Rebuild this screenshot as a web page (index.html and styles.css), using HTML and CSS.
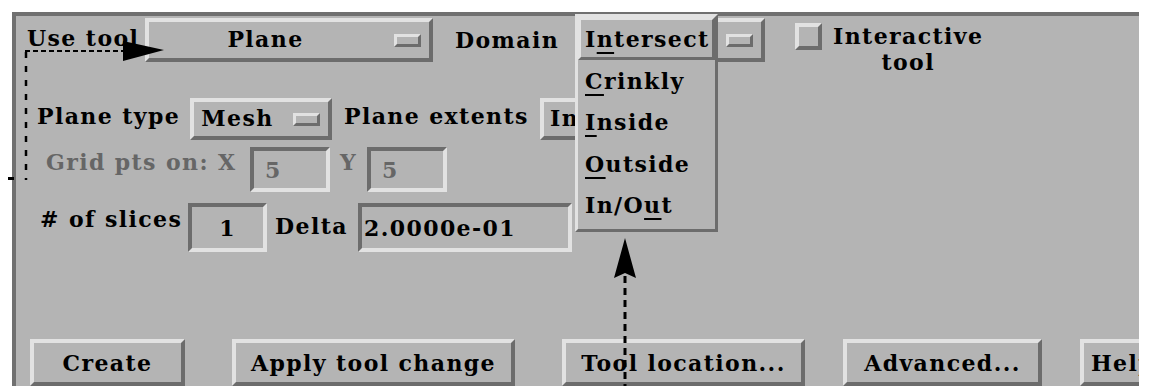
FILE: index.html
```html
<!DOCTYPE html>
<html lang="en">
<head>
    <meta charset="UTF-8">
    <meta name="viewport" content="width=device-width, initial-scale=1.0">
    <title>Plane tool</title>
    <link rel="stylesheet" href="styles.css">
</head>
<body>
    <div class="panel">

        <div class="row row-tool">
            <span class="label label-use">Use tool</span>
            <div class="option option-plane">
                <span class="option-text">Plane</span>
                <span class="indicator"></span>
            </div>
            <span class="label label-domain">Domain</span>
            <div class="option option-domain">
                <span class="option-text"></span>
                <span class="indicator"></span>
            </div>
            <div class="toggle">
                <span class="check"></span>
                <span class="toggle-text">Interactive<br>tool</span>
            </div>
        </div>

        <div class="row row-plane">
            <span class="label label-ptype">Plane type</span>
            <div class="option option-mesh">
                <span class="option-text">Mesh</span>
                <span class="indicator"></span>
            </div>
            <span class="label label-extents">Plane extents</span>
            <div class="option option-extents">
                <span class="option-text">In</span>
                <span class="indicator"></span>
            </div>
        </div>

        <div class="row row-grid">
            <span class="label label-grid disabled">Grid pts on: X</span>
            <div class="entry entry-x disabled">5</div>
            <span class="label label-y disabled">Y</span>
            <div class="entry entry-y disabled">5</div>
        </div>

        <div class="row row-slices">
            <span class="label label-slices"># of slices</span>
            <div class="entry entry-n">1</div>
            <span class="label label-delta">Delta</span>
            <div class="entry entry-delta">2.0000e-01</div>
        </div>

        <div class="row row-actions">
            <div class="button btn-create">Create</div>
            <div class="button btn-apply">Apply tool change</div>
            <div class="button btn-location">Tool location...</div>
            <div class="button btn-advanced">Advanced...</div>
            <div class="button btn-help">Help</div>
        </div>

    </div>

    <!-- popup menu of the Domain option, shown open -->
    <div class="popup">
        <div class="popup-item armed">I<u>n</u>tersect</div>
        <div class="popup-item"><u>C</u>rinkly</div>
        <div class="popup-item"><u>I</u>nside</div>
        <div class="popup-item"><u>O</u>utside</div>
        <div class="popup-item">In/O<u>u</u>t</div>
    </div>

    <!-- callout arrows -->
    <svg class="callouts" width="1155" height="386" viewBox="0 0 1155 386">
        <line x1="25" y1="51" x2="124" y2="51" stroke="#000" stroke-width="2" stroke-dasharray="5 3"/>
        <polygon points="123,41 164,50 123,61" fill="#000"/>
        <line x1="26" y1="52" x2="26" y2="180" stroke="#000" stroke-width="2.5" stroke-dasharray="6 8"/>
        <line x1="8" y1="178.5" x2="14" y2="178.5" stroke="#000" stroke-width="3"/>
        <line x1="625" y1="276" x2="625" y2="386" stroke="#000" stroke-width="3" stroke-dasharray="7 5"/>
        <polygon points="625,238 614,278 625,273 636,278" fill="#000"/>
    </svg>
</body>
</html>
```

FILE: styles.css
```css
body {
    margin: 0;
    padding: 0;
    background-color: #fff;
    font-family: "DejaVu Serif", serif;
    font-weight: bold;
    font-size: 22px;
    letter-spacing: 1.4px;
    color: #000;
    overflow: hidden;
}
.panel {
    margin: 12px 0 0 12px;
    width: 1123px;
    height: 380px;
    padding-top: 2px;
    background-color: #b4b4b4;
    border-top: 4px solid #707070;
    border-left: 4px solid #707070;
    overflow: hidden;
}
.row {
    display: flex;
    align-items: center;
}
.row-tool {
    height: 44px;
}
.row-plane {
    height: 42px;
    margin-top: 36px;
}
.row-grid {
    height: 45px;
    margin-top: 7px;
}
.row-slices {
    height: 49px;
    margin-top: 11px;
}
.row-actions {
    height: 47px;
    margin-top: 87px;
}
.label {
    flex: none;
    white-space: nowrap;
}
.disabled {
    color: #666;
}

/* raised and sunken frames */
.option, .button, .check, .indicator, .popup, .armed {
    border-style: solid;
    border-color: #e2e2e2 #6c6c6c #6c6c6c #e2e2e2;
}
.entry {
    border-style: solid;
    border-color: #6c6c6c #e2e2e2 #e2e2e2 #6c6c6c;
}

.option {
    box-sizing: border-box;
    flex: none;
    display: flex;
    align-items: center;
    height: 100%;
    border-width: 4px;
    padding-right: 8px;
}
.option-text {
    flex: 1;
    text-align: center;
    white-space: nowrap;
    margin-bottom: 2px;
}
.indicator {
    flex: none;
    box-sizing: border-box;
    width: 27px;
    height: 13px;
    border-width: 3px;
    margin-left: 12px;
}

.label-use {
    margin-left: 11px;
    width: 118px;
    margin-bottom: 5px;
}
.option-plane {
    width: 288px;
}
.label-domain {
    margin-left: 22px;
    width: 120px;
}
.option-domain {
    width: 190px;
}
.toggle {
    align-self: flex-start;
    display: flex;
    align-items: flex-start;
    margin-top: 5px;
    margin-left: 30px;
}
.check {
    box-sizing: border-box;
    width: 27px;
    height: 27px;
    border-width: 4px;
}
.toggle-text {
    margin-left: 11px;
    line-height: 26px;
    text-align: center;
}

.label-ptype {
    margin-left: 21px;
    width: 153px;
    margin-bottom: 6px;
}
.option-mesh {
    width: 142px;
}
.label-extents {
    margin-left: 12px;
    width: 196px;
    margin-bottom: 6px;
}
.option-extents {
    width: 160px;
}
.option-extents .option-text {
    text-align: left;
    padding-left: 6px;
}

.entry {
    box-sizing: border-box;
    flex: none;
    height: 100%;
    border-width: 4px;
    display: flex;
    align-items: center;
}
.label-grid {
    margin-left: 30px;
    width: 204px;
    margin-bottom: 16px;
}
.entry-x, .entry-y {
    width: 80px;
    padding-left: 11px;
}
.label-y {
    margin-left: 10px;
    width: 27px;
    margin-bottom: 16px;
}

.label-slices {
    margin-left: 24px;
    width: 148px;
    margin-bottom: 18px;
}
.entry-n {
    width: 79px;
    justify-content: center;
}
.label-delta {
    margin-left: 8px;
    width: 83px;
    margin-bottom: 3px;
}
.entry-delta {
    width: 214px;
    padding-left: 2px;
}

.button {
    box-sizing: border-box;
    flex: none;
    height: 100%;
    border-width: 4px;
    display: flex;
    align-items: center;
    justify-content: center;
    white-space: nowrap;
}
.btn-create {
    margin-left: 14px;
    width: 155px;
}
.btn-apply {
    margin-left: 47px;
    width: 283px;
}
.btn-location {
    margin-left: 47px;
    width: 243px;
}
.btn-advanced {
    margin-left: 38px;
    width: 199px;
}
.btn-help {
    margin-left: 38px;
    width: 86px;
}

.popup {
    position: absolute;
    left: 575px;
    top: 14px;
    box-sizing: border-box;
    width: 143px;
    height: 218px;
    border-width: 3px;
    background-color: #b4b4b4;
}
.popup-item {
    box-sizing: border-box;
    height: 41.5px;
    padding-left: 7px;
    display: flex;
    align-items: center;
    white-space: nowrap;
}
.popup-item.armed {
    height: 43px;
    border-width: 3px;
    padding-left: 4px;
}
.popup-item u {
    text-decoration-thickness: 2px;
    text-underline-offset: 5px;
}
.callouts {
    position: absolute;
    left: 0;
    top: 0;
    pointer-events: none;
}
```
